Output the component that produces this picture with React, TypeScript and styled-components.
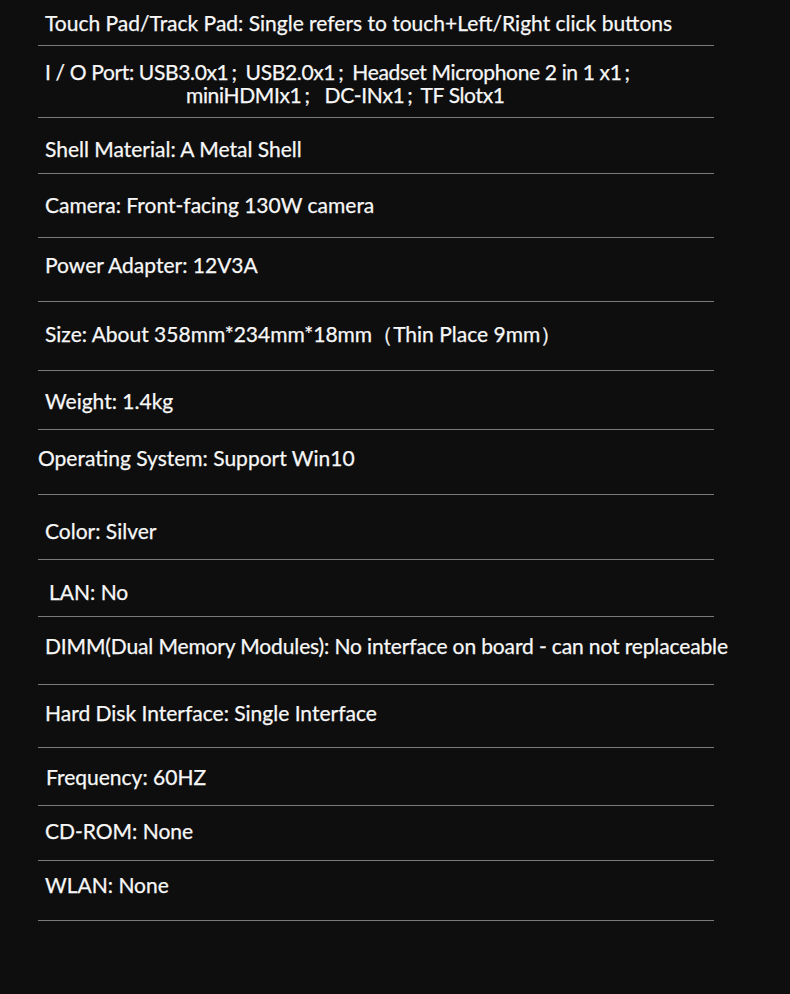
import React from "react";
import styled, { createGlobalStyle } from "styled-components";

const GlobalStyle = createGlobalStyle`
  html, body {
    margin: 0;
    padding: 0;
    background: #0e0e0e;
  }
`;

interface Spec {
  text: React.ReactNode;
  cont?: React.ReactNode;
  h: number;
  pad: number;
  indent?: number;
  tracking?: number;
}

const Page = styled.div`
  min-height: 994px;
  background: #0e0e0e;
  padding-left: 38px;
  font-family: Lato, "Open Sans", sans-serif;
  color: #f7f7f7;
`;

const List = styled.div`
  width: 676px;
  display: flex;
  flex-direction: column;
`;

const Row = styled.div<{ $h: number; $pad: number; $indent: number; $tracking: number }>`
  height: ${({ $h }) => $h}px;
  box-sizing: border-box;
  padding-top: ${({ $pad }) => $pad}px;
  padding-left: ${({ $indent }) => 7 + $indent}px;
  border-bottom: 1px solid #7a7a7a;
  white-space: nowrap;
  font-size: 21px;
  line-height: 24px;
  letter-spacing: ${({ $tracking }) => $tracking}px;
  -webkit-text-stroke: 0.25px #f7f7f7;
`;

const Line = styled.div<{ $tight?: boolean }>`
  line-height: ${({ $tight }) => ($tight ? "23px" : "24px")};
`;

const Cont = styled(Line)`
  padding-left: 141px;
`;

// ";" followed by a gap, as the full-width separators in the listing
const Semi = styled.span<{ $gap: number }>`
  margin-left: 3px;
  margin-right: ${({ $gap }) => $gap}px;
`;

const specs: Spec[] = [
  { text: "Touch Pad/Track Pad: Single refers to touch+Left/Right click buttons", h: 46, pad: 11 },
  {
    text: (
      <>
        I / O Port: USB3.0x1<Semi $gap={9}>;</Semi>USB2.0x1<Semi $gap={9}>;</Semi>
        Headset Microphone 2 in 1 x1<Semi $gap={0}>;</Semi>
      </>
    ),
    cont: (
      <>
        miniHDMIx1<Semi $gap={15}>;</Semi>DC-INx1<Semi $gap={8}>;</Semi>TF Slotx1
      </>
    ),
    h: 72,
    pad: 14,
    tracking: -0.35,
  },
  { text: "Shell Material: A Metal Shell", h: 56, pad: 19 },
  { text: "Camera: Front-facing 130W camera", h: 64, pad: 19 },
  { text: "Power Adapter: 12V3A", h: 64, pad: 15 },
  { text: "Size: About 358mm*234mm*18mm（Thin Place 9mm）", h: 69, pad: 20 },
  { text: "Weight: 1.4kg", h: 59, pad: 18 },
  { text: "Operating System: Support Win10", h: 65, pad: 16, indent: -8 },
  { text: "Color: Silver", h: 65, pad: 24 },
  { text: "LAN: No", h: 57, pad: 20, indent: 4 },
  {
    text: "DIMM(Dual Memory Modules): No interface on board - can not replaceable",
    h: 68,
    pad: 17,
    tracking: -0.13,
  },
  { text: "Hard Disk Interface: Single Interface", h: 63, pad: 16 },
  { text: "Frequency: 60HZ", h: 58, pad: 17, indent: 1 },
  { text: "CD-ROM: None", h: 55, pad: 13 },
  { text: "WLAN: None", h: 60, pad: 12 },
];

export default function App() {
  return (
    <>
      <GlobalStyle />
      <Page>
        <List>
          {specs.map((s, i) => (
            <Row
              key={i}
              $h={s.h}
              $pad={s.pad}
              $indent={s.indent ?? 0}
              $tracking={s.tracking ?? 0}
            >
              <Line $tight={!!s.cont}>{s.text}</Line>
              {s.cont && <Cont $tight>{s.cont}</Cont>}
            </Row>
          ))}
        </List>
      </Page>
    </>
  );
}
